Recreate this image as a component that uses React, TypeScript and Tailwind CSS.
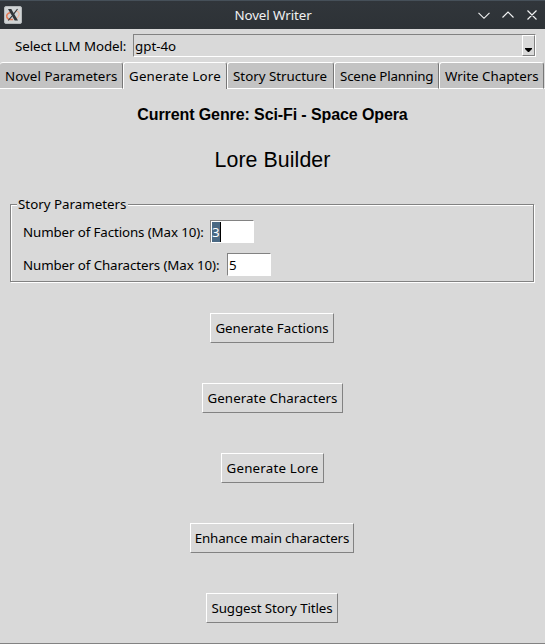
import React from "react";

const tabs = [
  { label: "Novel Parameters", style: "w-[123px] pl-[5px] tracking-[0.05px] border-l-0" },
  { label: "Generate Lore", style: "w-[104px] pl-[5px] tracking-[0.2px] border-l", active: true },
  { label: "Story Structure", style: "w-[107px] pl-[5px] border-l" },
  { label: "Scene Planning", style: "w-[105px] pl-[5px] tracking-[-0.18px] border-l" },
  { label: "Write Chapters", style: "w-[105px] pl-[5px] border-l" },
];

const actions = [
  { label: "Generate Factions", style: "w-[124px] mr-px" },
  { label: "Generate Characters", style: "w-[141px] tracking-[0.05px]" },
  { label: "Generate Lore", style: "w-[103px] tracking-[0.2px]" },
  { label: "Enhance main characters", style: "w-[164px] mr-px tracking-[-0.13px]" },
  { label: "Suggest Story Titles", style: "w-[132px] mr-px tracking-[-0.1px]" },
];

function XIcon() {
  return (
    <svg className="ml-1 h-[18px] w-[18px] shrink-0" viewBox="0 0 18 18">
      <rect x="0.5" y="0.5" width="17" height="17" rx="1.5" fill="#d0d4d5" stroke="#b4b8ba" />
      <path d="M7 6.2C4 7 2.3 9 2.8 11c.5 2 3.3 2.8 6.2 2.4" fill="none" stroke="#e37a55" strokeWidth="1.5" />
      <path d="M11.5 5.2c2.6 0 3.9 1.3 3.6 3.3-.3 1.9-1.6 3.4-3.6 4.3" fill="none" stroke="#edb49b" strokeWidth="1.2" />
      <path d="M4 3h3.3l6.7 11.5h-3.3z" fill="#303437" />
      <path d="M13.5 3L9.8 7.8M8 10.2l-3.8 4.3" stroke="#303437" strokeWidth="1.1" />
    </svg>
  );
}

function TitleBar() {
  return (
    <header className="flex h-[29px] items-center border-t border-[#465059] bg-linear-to-b from-[#31363b] to-[#2d3236] text-[#eff0f1]">
      <XIcon />
      <h1 className="flex-1 pl-[49px] text-center text-[13.333px] leading-[18px] tracking-[-0.08px]">Novel Writer</h1>
      <svg className="h-[18px] w-[70px]" viewBox="0 0 70 18" fill="none" stroke="#f1f2f3" strokeWidth="1.15">
        <path d="M3.5 6.8l5.5 5.5 5.5-5.5M27.5 11.5L33 6l5.5 5.5M52.5 4.5l9 9M61.5 4.5l-9 9" />
      </svg>
    </header>
  );
}

function Field({ label, value, labelWidth, selected }: { label: string; value: string; labelWidth: string; selected?: boolean }) {
  return (
    <div className="flex h-[23px] items-center">
      <label className={`${labelWidth} shrink-0 leading-[18px]`}>{label}</label>
      <div className="flex h-[23px] w-11 items-center border border-[#828282] border-r-white border-b-white bg-white pl-px">
        <span className={selected ? "h-[20px] w-[9px] border-r border-black bg-[#4a6984] leading-[20px] text-white" : "leading-[20px]"}>
          {value}
        </span>
      </div>
    </div>
  );
}

export default function App() {
  return (
    <div className="flex h-[644px] w-[545px] flex-col overflow-hidden bg-[#d9d9d9] font-['Noto_Sans',sans-serif] text-[13.333px] whitespace-nowrap text-black">
      <TitleBar />
      <div className="flex h-[33px] shrink-0 items-start pt-[5px] pl-[15px]">
        <label className="w-[118px] pt-[3px] leading-[18px] tracking-[-0.09px]">Select LLM Model:</label>
        <div className="flex h-[23px] w-[403px] justify-between border border-[#828282] border-r-white border-b-white pl-px">
          <span className="leading-[22px]">gpt-4o</span>
          <div className="flex w-[13px] items-end justify-center border border-white border-r-[#828282] border-b-[#828282] pb-[3px]">
            <svg className="h-[4px] w-[7px]" viewBox="0 0 7 4"><path d="M0 0h7v1L4 4H3L0 1z" /></svg>
          </div>
        </div>
      </div>
      <nav className="flex h-[27px] shrink-0 items-start">
        {tabs.map((tab) => (
          <div
            key={tab.label}
            className={`${tab.style} h-[27px] shrink-0 rounded-t-[3px] border-t border-r border-t-white border-r-[#777777] border-l-white leading-[27px] ${
              tab.active ? "bg-[#d9d9d9]" : "border-b border-b-white bg-[#c3c3c3]"
            }`}
          >
            {tab.label}
          </div>
        ))}
        <div className="h-[27px] flex-1 border-b border-white" />
      </nav>
      <main className="flex flex-1 flex-col items-center border-b border-[#828282]">
        <h2 className="mt-[17px] font-['Liberation_Sans',sans-serif] text-[16px] leading-[18px] font-bold tracking-[-0.1px]">
          Current Genre: Sci-Fi - Space Opera
        </h2>
        <h3 className="mt-[23px] font-['Liberation_Sans',sans-serif] text-[21.333px] leading-[26px] tracking-[0.08px]">Lore Builder</h3>
        <section className="mt-[31px] mr-px h-[78px] w-[524px] border border-[#828282] px-[12px] shadow-[1px_1px_0_#fff,inset_1px_1px_0_#fff]">
          <div className="-mt-[10px] -ml-[6px] h-[18px] w-[111px] bg-[#d9d9d9] pl-px leading-[18px]">Story Parameters</div>
          <div className="mt-[7px] flex flex-col gap-[10px]">
            <Field label="Number of Factions (Max 10):" labelWidth="w-[187px] tracking-[-0.11px]" value="3" selected />
            <Field label="Number of Characters (Max 10):" labelWidth="w-[204px] tracking-[-0.1px]" value="5" />
          </div>
        </section>
        <div className="mt-[31px] flex flex-col items-center gap-10">
          {actions.map((action) => (
            <button
              key={action.label}
              className={`${action.style} h-[30px] border border-white border-r-[#828282] border-b-[#828282] text-center leading-[28px]`}
            >
              {action.label}
            </button>
          ))}
        </div>
      </main>
    </div>
  );
}
